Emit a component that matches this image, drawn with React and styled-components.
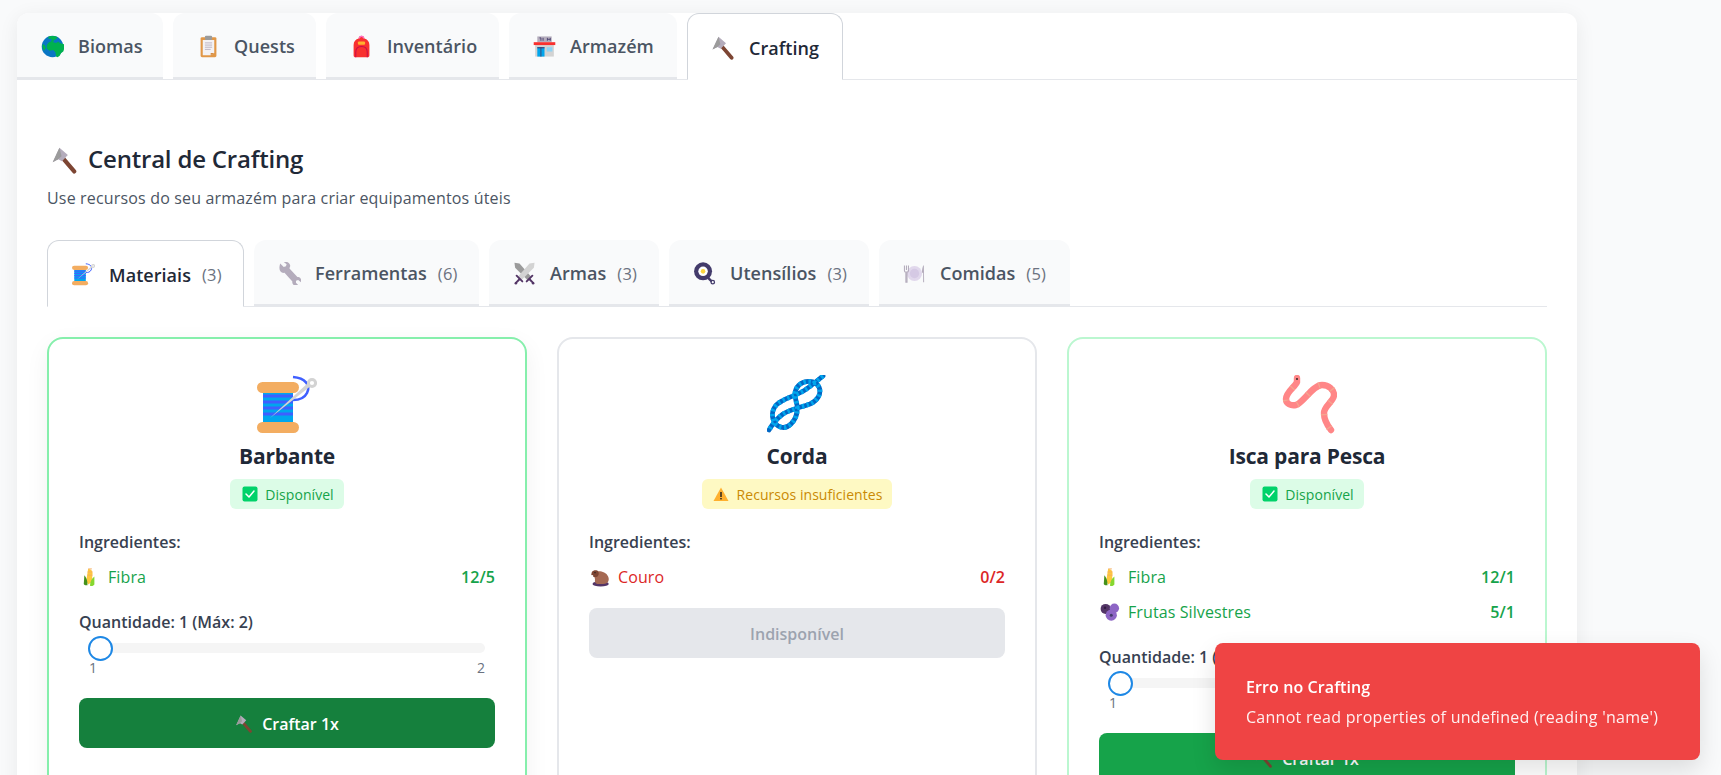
import React from "react";
import styled, { createGlobalStyle } from "styled-components";

const Global = createGlobalStyle`
  html, body { margin: 0; padding: 0; height: 775px; overflow: hidden; background: #f9fafb; }
  * { box-sizing: border-box; }
  body { font-family: "Open Sans", "Noto Sans", sans-serif; color: #1f2937; }
`;

const Page = styled.div`
  padding: 13px 144px 0 17px;
`;
const Panel = styled.main`
  background: #fff;
  border-radius: 12px;
  box-shadow: 0 4px 20px rgba(0, 0, 0, 0.07);
`;
const TabBar = styled.nav`
  display: flex;
  gap: 10px;
  height: 67px;
  border-bottom: 1px solid #e5e7eb;
`;
const TabButton = styled.div`
  display: flex;
  align-items: center;
  gap: 11px;
  width: ${(p) => p.$w}px;
  padding-left: 20px;
  padding-top: 2px;
  border-radius: 12px 12px 0 0;
  font-size: 18px;
  font-weight: 600;
  letter-spacing: 0.05px;
  background: ${(p) => (p.$active ? "#fff" : "#f9fafb")};
  color: ${(p) => (p.$active ? "#1f2937" : "#4b5563")};
  border: ${(p) => (p.$active ? "1px solid #d1d5db" : "none")};
  border-bottom: ${(p) => (p.$active ? "1px solid #fff" : "2px solid #e5e7eb")};
  height: ${(p) => (p.$active ? "67px" : "66px")};
  white-space: nowrap;
`;
const Slot = styled.span`
  flex: none;
  display: inline-flex;
  align-items: center;
  justify-content: center;
  width: ${(p) => p.$w}px;
`;
const Count = styled.span`
  font-size: 16.5px;
  font-weight: 400;
  color: #6b7280;
  letter-spacing: 0.2px;
`;
const Content = styled.section`
  padding: 64px 30px 30px;
`;
const Heading = styled.h1`
  display: flex;
  align-items: center;
  gap: 10px;
  margin: 0;
  padding-left: 4px;
  height: 32px;
  font-size: 24px;
  line-height: 28px;
  font-weight: 600;
  letter-spacing: -0.2px;
  color: #1f2937;
`;
const HeadingText = styled.span`
  padding-bottom: 3px;
`;
const Subtitle = styled.p`
  margin: 10px 0 0;
  font-size: 16px;
  line-height: 24px;
  letter-spacing: 0.17px;
  color: #4b5563;
`;
const SubBar = styled.div`
  display: flex;
  gap: 10px;
  height: 67px;
  margin-top: 30px;
  border-bottom: 1px solid #e5e7eb;
`;
const Grid = styled.div`
  display: grid;
  grid-template-columns: repeat(3, 1fr);
  gap: 30px;
  margin-top: 30px;
`;
const Card = styled.article`
  position: relative;
  padding: 36px 30px 30px;
  border: 2px solid ${(p) => p.$border};
  border-radius: 16px;
  background: #fff;
  box-shadow: ${(p) => (p.$lift ? "0 8px 24px rgba(0,0,0,0.06)" : "none")};
`;
const IconBox = styled.div`
  display: flex;
  justify-content: center;
  height: 58px;
`;
const Title = styled.h3`
  margin: 9px 0 0;
  text-align: center;
  font-size: 21px;
  line-height: 28px;
  font-weight: 700;
  letter-spacing: -0.2px;
  color: #1f2937;
`;
const BadgeRow = styled.div`
  display: flex;
  justify-content: center;
  margin-top: 9px;
`;
const Badge = styled.div`
  display: inline-flex;
  align-items: center;
  gap: 6px;
  height: 30px;
  padding: 0 10px;
  border-radius: 6px;
  font-size: 14px;
  letter-spacing: 0.05px;
  background: ${(p) => (p.$ok ? "#dcfce7" : "#fef9c3")};
  color: ${(p) => (p.$ok ? "#16a34a" : "#ca8a04")};
`;
const Label = styled.div`
  font-size: 16px;
  line-height: 22px;
  font-weight: 600;
  color: #374151;
  padding-bottom: 1px;
  margin-top: ${(p) => p.$mt}px;
`;
const Row = styled.div`
  display: flex;
  align-items: center;
  height: 24px;
  line-height: 22px;
  margin-top: 11px;
  font-size: 16px;
  letter-spacing: 0.1px;
  color: ${(p) => (p.$ok ? "#16a34a" : "#dc2626")};
`;
const RowName = styled.span`
  flex: 1;
  margin-left: 7px;
  padding-bottom: 1px;
`;
const RowQty = styled.span`
  font-weight: 600;
  padding-bottom: 1px;
`;
const Track = styled.div`
  position: relative;
  height: 10px;
  margin: 9px 10px 0;
  border-radius: 5px;
  background: #f5f5f5;
`;
const Thumb = styled.span`
  position: absolute;
  left: -1px;
  top: -7.5px;
  width: 25px;
  height: 25px;
  border-radius: 50%;
  background: #fff;
  border: 2px solid #1e88e5;
`;
const Ends = styled.div`
  display: flex;
  justify-content: space-between;
  margin: 5px 10px 0;
  font-size: 14px;
  line-height: 20px;
  color: #6b7280;
`;
const Action = styled.button`
  display: flex;
  align-items: center;
  justify-content: center;
  gap: 9px;
  width: 100%;
  height: 50px;
  padding-top: 2px;
  margin-top: ${(p) => p.$mt}px;
  border: none;
  border-radius: 8px;
  font-family: inherit;
  font-size: 16px;
  font-weight: 600;
  background: ${(p) => p.$bg};
  color: ${(p) => p.$fg};
`;
const Toast = styled.aside`
  position: fixed;
  right: 21px;
  bottom: 15px;
  display: flex;
  flex-direction: column;
  justify-content: center;
  gap: 6px;
  width: 485px;
  height: 117px;
  padding: 0 31px;
  border-radius: 8px;
  background: #ef4444;
  color: #fff;
  box-shadow: 0 10px 24px rgba(0, 0, 0, 0.12);
`;
const ToastTitle = styled.strong`
  font-size: 16px;
  line-height: 24px;
  font-weight: 600;
  letter-spacing: 0.1px;
`;
const ToastText = styled.span`
  font-size: 16px;
  line-height: 24px;
  letter-spacing: 0.28px;
  color: rgba(255, 255, 255, 0.92);
  white-space: nowrap;
`;

const Svg = ({ size, vb = 32, children }) => (
  <svg width={size} height={size} viewBox={`0 0 ${vb} ${vb}`} style={{ display: "block" }}>
    {children}
  </svg>
);

const Globe = ({ size }) => (
  <Svg size={size}>
    <circle cx="16" cy="16" r="15" fill="#0a76c4" />
    <path d="M11 2c4-1 9-1 12 1l-2 3-3 1-1 3 4 1 3-2 2 2 6 2c1 3 0 8-1 10l-3 2-2 4-3 2-2-1-1-6-3-3-5 1-4-3v-5l3-4 3-1 1-3-5-1 1-4z" fill="#00b14f" />
    <path d="M2 13l3 1 2 4-3 4c-2-3-2-6-2-9z" fill="#00b14f" />
  </Svg>
);
const Clipboard = ({ size }) => (
  <Svg size={size}>
    <rect x="5" y="3" width="22" height="28" rx="2" fill="#e19747" />
    <path d="M8 7h16v18l-5 3H8z" fill="#f4f2f4" />
    <path d="M24 25l-5 3v-3z" fill="#d3883e" />
    <rect x="11" y="1" width="10" height="6" rx="1.5" fill="#9b9b9b" />
    <path d="M11 11h10M11 14h10M11 17h10M11 20h8" stroke="#b4acbc" strokeWidth="1.2" />
  </Svg>
);
const Backpack = ({ size }) => (
  <Svg size={size}>
    <path d="M16 1c-3 0-4 2-4 4-4 1-7 4-7 9v14c0 2 1 3 3 3h16c2 0 3-1 3-3V14c0-5-3-8-7-9 0-2-1-4-4-4z" fill="#f8312f" />
    <path d="M13 5c0-2 1-3 3-3s3 1 3 3" fill="none" stroke="#ff6dc6" strokeWidth="1.6" />
    <rect x="11" y="9" width="10" height="4.5" rx="1.5" fill="#ffb02e" />
    <path d="M8 31v-7c0-5 3-8 8-8s8 3 8 8v7" fill="none" stroke="#ca0b4a" strokeWidth="1.4" />
  </Svg>
);
const Store = ({ size }) => (
  <Svg size={size}>
    <rect x="6" y="2" width="20" height="8" fill="#b4acbc" />
    <path d="M9 4h2v4M14 4v4M20 4v4M24 4v4M20 6h4" stroke="#433b6b" strokeWidth="1.2" fill="none" />
    <rect x="3" y="13" width="26" height="17" fill="#d3d3d3" />
    <rect x="1" y="10" width="30" height="4" fill="#f8312f" />
    <rect x="6" y="17" width="10" height="13" fill="#00a6ed" />
    <path d="M11 17v13" stroke="#433b6b" strokeWidth="1.2" />
    <rect x="6" y="17" width="10" height="1.5" fill="#433b6b" />
    <rect x="19" y="17" width="8" height="6" fill="#8fd3f4" />
  </Svg>
);
const Hammer = ({ size }) => (
  <Svg size={size}>
    <path d="M12.5 11.5L27.5 29" stroke="#7d4533" strokeWidth="5" strokeLinecap="round" />
    <path d="M10 1L20 9.5 13 17 8.5 14.5 2 18z" fill="#b4acbc" />
    <path d="M10 1L12.5 11 8.5 14.5 2 18z" fill="#9b9b9b" />
  </Svg>
);
const Spool = ({ size }) => (
  <Svg size={size} vb={60}>
    <rect x="6" y="17" width="30" height="31" fill="#00a6ed" />
    <path d="M6 21h30M6 27h30M6 33h30M6 39h30" stroke="#3f5fff" strokeWidth="3" />
    <rect x="0" y="7" width="42" height="11" rx="5.5" fill="#f3ad61" />
    <rect x="0" y="47" width="42" height="11" rx="5.5" fill="#f3ad61" />
    <path d="M36 2C48 3 54 10 50 18 47 24 42 25 36 25" fill="none" stroke="#3f5fff" strokeWidth="2.6" />
    <path d="M13 43L52 7l3 3z" fill="#d3d3d3" />
    <circle cx="55" cy="8" r="3.6" fill="#fff" stroke="#d3d3d3" strokeWidth="3" />
  </Svg>
);
const Wrench = ({ size }) => (
  <Svg size={size}>
    <path d="M3 2l5 5 3-1 1-3-4-3c3-1 8 0 9 5 0 2-1 3-1 4l11 12c4-1 6 3 5 7l-4-3-3 1v3l3 3c-4 2-9 0-8-5L9 15c-5 1-9-3-6-13z" fill="#b4acbc" />
  </Svg>
);
const Swords = ({ size }) => (
  <Svg size={size}>
    <path d="M2 1l7 1 16 18-5 5L3 8z" fill="#9b9b9b" />
    <path d="M30 1l-7 1L7 20l5 5L29 8z" fill="#d3d3d3" />
    <path d="M5 19l8 8M27 19l-8 8" stroke="#533566" strokeWidth="2.6" strokeLinecap="round" />
    <path d="M9 24l-5 5M23 24l5 5" stroke="#533566" strokeWidth="2.8" strokeLinecap="round" />
    <circle cx="4" cy="29.5" r="1.8" fill="#533566" />
    <circle cx="28" cy="29.5" r="1.8" fill="#533566" />
  </Svg>
);
const Pan = ({ size }) => (
  <Svg size={size}>
    <path d="M21 22l5 5" stroke="#433b6b" strokeWidth="3.4" />
    <circle cx="27.5" cy="28" r="2.4" fill="none" stroke="#433b6b" strokeWidth="1.8" />
    <circle cx="14" cy="13" r="12.5" fill="#433b6b" />
    <circle cx="14" cy="13" r="6.6" fill="#fff" />
    <circle cx="14" cy="13" r="3.2" fill="#fcd53f" />
  </Svg>
);
const Plate = ({ size }) => (
  <Svg size={size}>
    <circle cx="16" cy="16" r="10.5" fill="#e1d8ec" />
    <circle cx="16" cy="16" r="6.5" fill="#d5c9e4" />
    <path d="M2 5v7c0 1 1 2 2 2v14h1.6V14c1 0 2-1 2-2V5M4.8 5v6" fill="none" stroke="#b4acbc" strokeWidth="1.5" />
    <path d="M29 4c-2 2-2.6 6-2.6 11H28v13h1.4z" fill="#b4acbc" />
  </Svg>
);
const knotPath = "M56 1C50 6 44 11 38 15 30 20 22 22 15 26 7 30 4 37 6 44 9 53 18 55 24 49 29 44 31 38 30 30 28 22 26 16 32 10 38 5 48 5 52 12 55 19 50 26 43 29 35 32 24 34 16 39 9 44 5 50 2 55";
const Knot = ({ size }) => (
  <Svg size={size} vb={60}>
    <path d={knotPath} fill="none" stroke="#0067c5" strokeWidth="4.8" strokeLinecap="round" />
    <path d={knotPath} fill="none" stroke="#00a6ed" strokeWidth="4.8" strokeDasharray="2.4 2.6" />
  </Svg>
);
const wormPath = "M20 3v4C18 12 9 17 9 24c0 5 5 7 10 6 7-2 17-20 26-20 7 0 12 5 12 10 0 6-10 11-10 18 0 7 3 12 7 17";
const Worm = ({ size }) => (
  <Svg size={size} vb={60}>
    <path d={wormPath} fill="none" stroke="#ff8687" strokeWidth="6.4" strokeLinecap="round" />
    <path d={wormPath} fill="none" stroke="#f4a68f" strokeWidth="6.4" strokeDasharray="1.2 13" strokeDashoffset="-11" />
    <circle cx="20" cy="4" r="0.9" fill="#1c1c1c" />
  </Svg>
);
const Corn = ({ size }) => (
  <Svg size={size}>
    <path d="M13 3c4 0 7 2 7 7l-1 14-6 4-3-6z" fill="#ffc83d" />
    <path d="M13 3h6M12 8h8M12 13h8" stroke="#f3ad61" strokeWidth="1.4" />
    <path d="M7 13c3 3 5 8 5 16-3 1-5 0-6-2z" fill="#44911b" />
    <path d="M23 15c-4 3-7 8-7 15 3 1 6 0 7-2z" fill="#86d72f" />
  </Svg>
);
const Beaver = ({ size }) => (
  <Svg size={size}>
    <ellipse cx="17" cy="27" rx="13" ry="4" fill="#533566" />
    <path d="M6 9c5-4 19-3 23 6 3 7-1 12-8 12H12c-3 0-5-3-4-7z" fill="#a56953" />
    <path d="M3 8c2-3 8-4 10-1 2 3 1 8-3 9-3 1-7-1-8-4z" fill="#7d4533" />
    <circle cx="8" cy="9" r="1.1" fill="#1c1c1c" />
    <rect x="2" y="13" width="3" height="3" fill="#fff" />
  </Svg>
);
const Berries = ({ size }) => (
  <Svg size={size}>
    <circle cx="9" cy="11" r="8" fill="#533566" />
    <circle cx="23" cy="10" r="7.5" fill="#8d65c5" />
    <circle cx="18" cy="21" r="9" fill="#8d65c5" />
    <circle cx="18" cy="21" r="2.4" fill="#433b6b" />
    <circle cx="8" cy="9" r="2" fill="#321b41" />
  </Svg>
);
const Check = ({ size }) => (
  <Svg size={size}>
    <rect x="1" y="1" width="30" height="30" rx="4" fill="#00d26a" />
    <path d="M8 16l6 6 10-12" fill="none" stroke="#fff" strokeWidth="3" strokeLinecap="round" strokeLinejoin="round" />
  </Svg>
);
const Warn = ({ size }) => (
  <Svg size={size}>
    <path d="M16 3L31 30H1z" fill="#ffb02e" />
    <rect x="14.6" y="12" width="2.8" height="10" fill="#1c1c1c" />
    <rect x="14.6" y="24" width="2.8" height="2.8" fill="#1c1c1c" />
  </Svg>
);

const mainTabs = [
  { name: "Biomas", Icon: Globe, w: 146, s: 23 },
  { name: "Quests", Icon: Clipboard, w: 143, s: 23 },
  { name: "Inventário", Icon: Backpack, w: 173, s: 23 },
  { name: "Armazém", Icon: Store, w: 168, s: 23 },
  { name: "Crafting", Icon: Hammer, w: 156, s: 24, active: true },
];
const subTabs = [
  { name: "Materiais", n: 3, Icon: Spool, w: 197, active: true },
  { name: "Ferramentas", n: 6, Icon: Wrench, w: 225 },
  { name: "Armas", n: 3, Icon: Swords, w: 170 },
  { name: "Utensílios", n: 3, Icon: Pan, w: 200 },
  { name: "Comidas", n: 5, Icon: Plate, w: 191 },
];

const Ingredients = ({ items, ok }) => (
  <>
    <Label $mt={22}>Ingredientes:</Label>
    {items.map(({ Icon, name, qty }) => (
      <Row key={name} $ok={ok}>
        <Slot $w={22}><Icon size={20} /></Slot>
        <RowName>{name}</RowName>
        <RowQty>{qty}</RowQty>
      </Row>
    ))}
  </>
);

const Quantity = () => (
  <>
    <Label $mt={22}>Quantidade: 1 (Máx: 2)</Label>
    <Track><Thumb /></Track>
    <Ends><span>1</span><span>2</span></Ends>
  </>
);

const CraftButton = ({ bg }) => (
  <Action $mt={20} $bg={bg} $fg="#fff">
    <Hammer size={18} />
    Craftar 1x
  </Action>
);

const Available = () => (
  <BadgeRow>
    <Badge $ok>
      <Slot $w={19}><Check size={16} /></Slot>
      Disponível
    </Badge>
  </BadgeRow>
);

export default function App() {
  return (
    <Page>
      <Global />
      <Panel>
        <TabBar>
          {mainTabs.map(({ name, Icon, w, s, active }) => (
            <TabButton key={name} $w={w} $active={active}>
              <Slot $w={30}><Icon size={s} /></Slot>
              {name}
            </TabButton>
          ))}
        </TabBar>
        <Content>
          <Heading>
            <Hammer size={27} />
            <HeadingText>Central de Crafting</HeadingText>
          </Heading>
          <Subtitle>Use recursos do seu armazém para criar equipamentos úteis</Subtitle>
          <SubBar>
            {subTabs.map(({ name, n, Icon, w, active }) => (
              <TabButton key={name} $w={w} $active={active}>
                <Slot $w={30}><Icon size={23} /></Slot>
                {name}
                <Count>({n})</Count>
              </TabButton>
            ))}
          </SubBar>
          <Grid>
            <Card $border="#86efac" $lift>
              <IconBox><Spool size={60} /></IconBox>
              <Title>Barbante</Title>
              <Available />
              <Ingredients ok items={[{ Icon: Corn, name: "Fibra", qty: "12/5" }]} />
              <Quantity />
              <CraftButton bg="#15803d" />
            </Card>
            <Card $border="#e5e7eb">
              <IconBox><Knot size={60} /></IconBox>
              <Title>Corda</Title>
              <BadgeRow>
                <Badge>
                  <Slot $w={19}><Warn size={16} /></Slot>
                  Recursos insuficientes
                </Badge>
              </BadgeRow>
              <Ingredients items={[{ Icon: Beaver, name: "Couro", qty: "0/2" }]} />
              <Action $mt={19} $bg="#e5e7eb" $fg="#9ca3af">Indisponível</Action>
            </Card>
            <Card $border="#bbf7d0">
              <IconBox><Worm size={60} /></IconBox>
              <Title>Isca para Pesca</Title>
              <Available />
              <Ingredients
                ok
                items={[
                  { Icon: Corn, name: "Fibra", qty: "12/1" },
                  { Icon: Berries, name: "Frutas Silvestres", qty: "5/1" },
                ]}
              />
              <Quantity />
              <CraftButton bg="#16a34a" />
            </Card>
          </Grid>
        </Content>
      </Panel>
      <Toast>
        <ToastTitle>Erro no Crafting</ToastTitle>
        <ToastText>Cannot read properties of undefined (reading 'name')</ToastText>
      </Toast>
    </Page>
  );
}
